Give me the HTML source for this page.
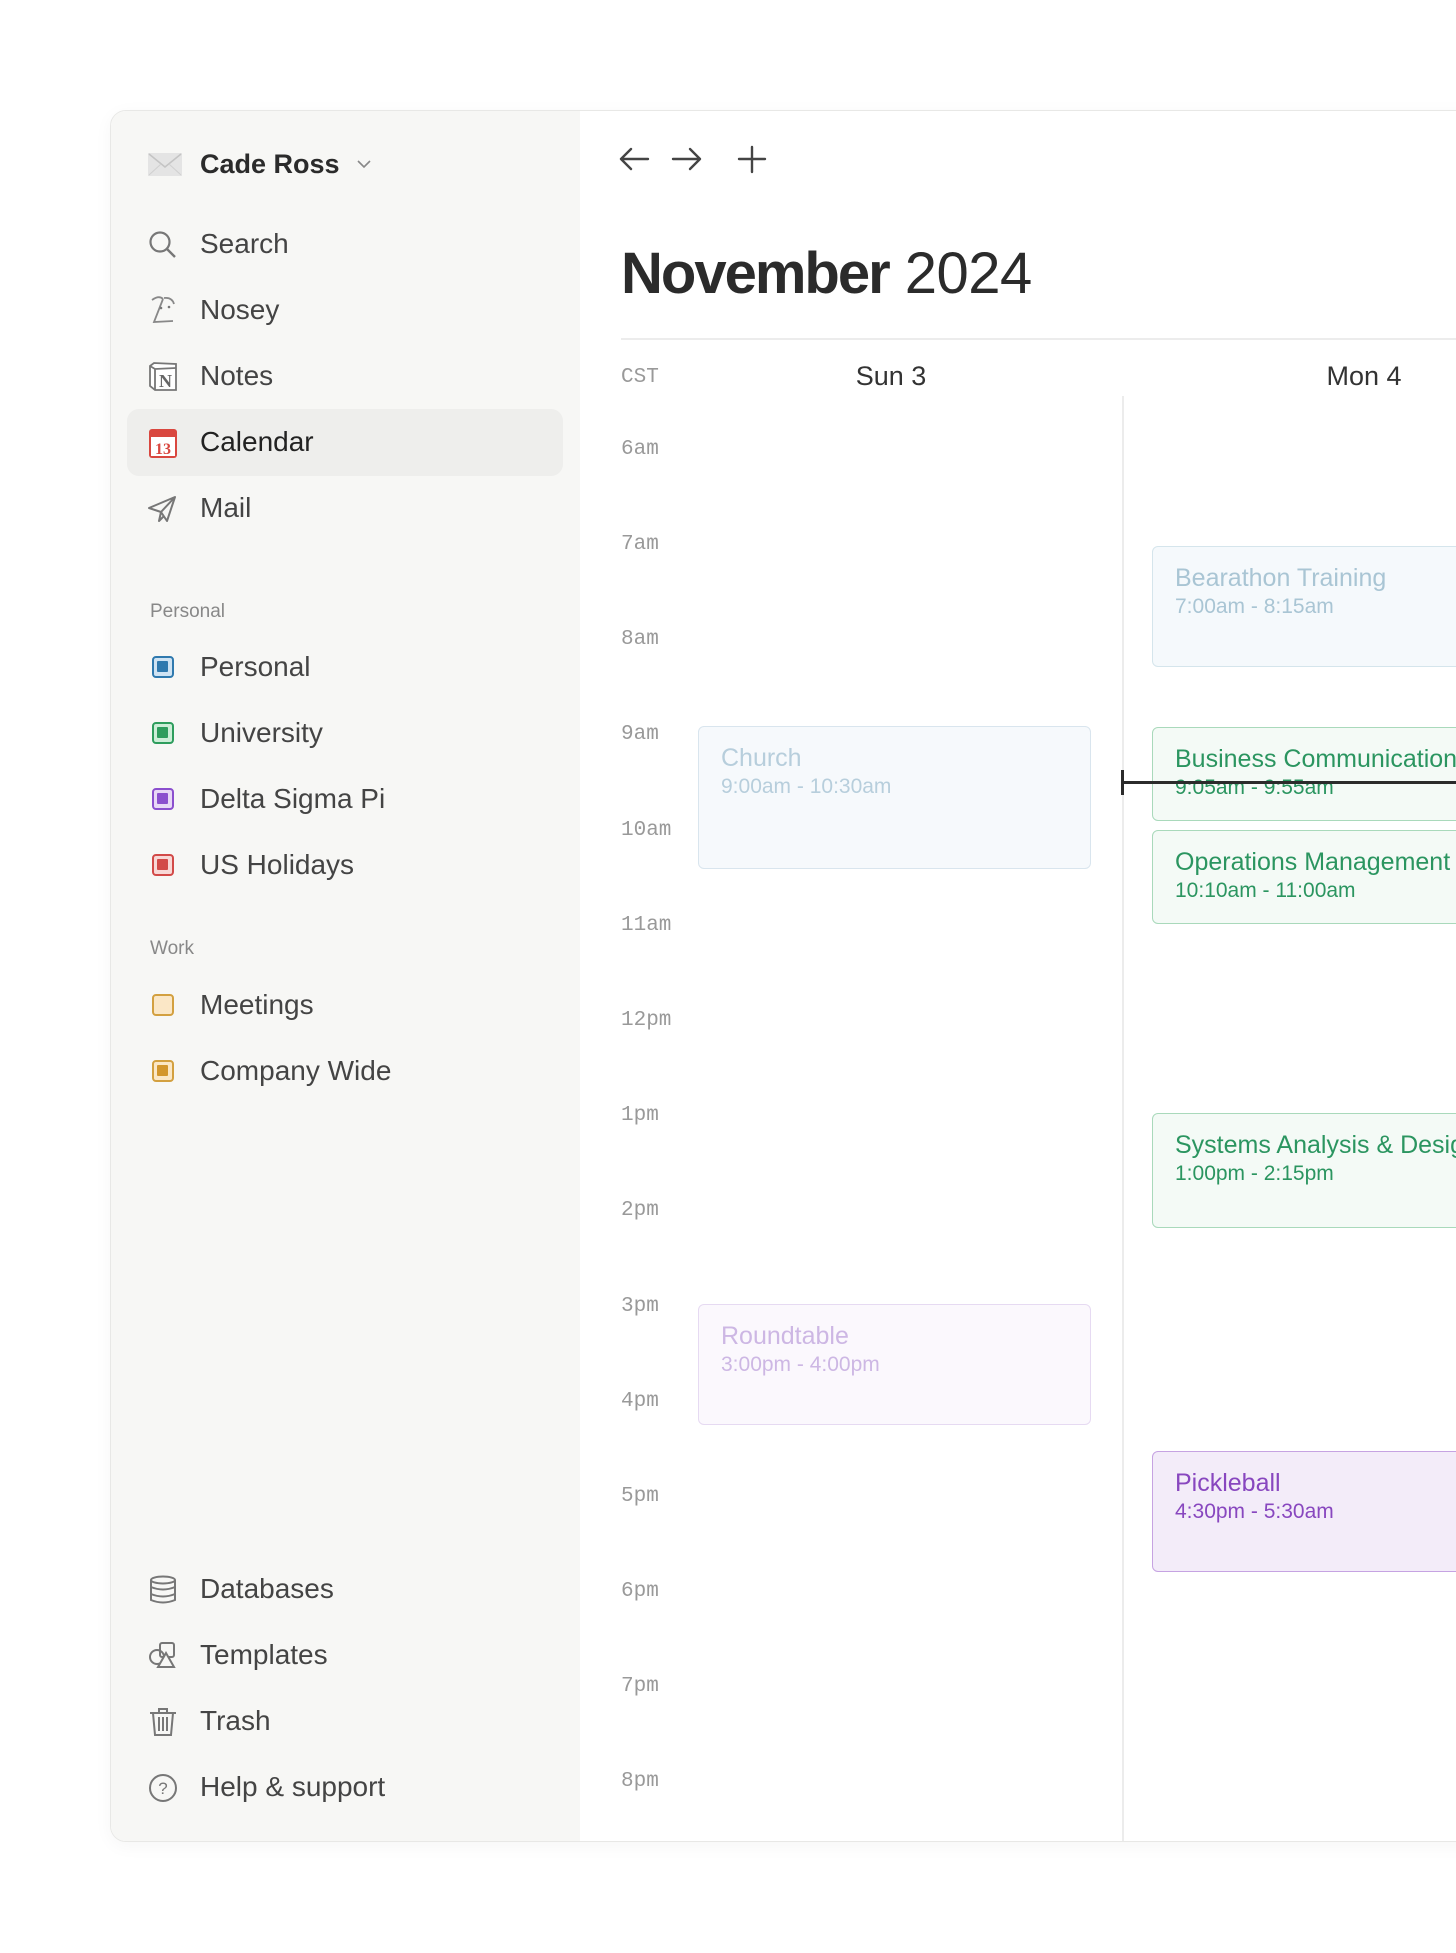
<!DOCTYPE html>
<html><head><meta charset="utf-8"><style>
*{margin:0;padding:0;box-sizing:border-box}
body{width:1456px;height:1953px;background:#fff;position:relative;overflow:hidden;font-family:"Liberation Sans",sans-serif}
.a{position:absolute}
#panel{left:110px;top:110px;width:1400px;height:1732px;border:1px solid #e8e8e6;border-radius:16px;background:#fff;box-shadow:0 4px 18px rgba(0,0,0,0.04);overflow:hidden}
#side{left:0;top:0;width:469px;height:100%;background:#f7f7f5}
.nav{position:absolute;left:89px;font-size:28px;color:#444;line-height:30px;transform:translateY(-15px);white-space:nowrap}
.ic{position:absolute;left:36px;transform:translateY(-15px)}
.sec{position:absolute;left:39px;font-size:19px;color:#888;transform:translateY(-11px)}
.sq{position:absolute;left:41px;width:22px;height:22px;border-radius:4px;border:2.5px solid;transform:translateY(-11px)}
.sq i{position:absolute;left:3px;top:3px;width:11px;height:11px;border-radius:1px}
.hr{position:absolute;left:510px;font-family:"Liberation Mono",monospace;font-size:21px;color:#999;transform:translateY(-10px)}
.ev{position:absolute;border:1.5px solid;border-radius:6px;padding:17px 0 0 22px;white-space:nowrap;overflow:hidden}
.ev b{display:block;font-weight:normal;font-size:25px;line-height:29px}
.ev s{display:block;text-decoration:none;font-size:21px;line-height:28px}
.g{background:#f4faf6;border-color:#a9d9bb;color:#2b9560}
.day{position:absolute;top:250px;width:140px;text-align:center;font-size:27px;color:#333;line-height:30px}
</style></head><body>
<div id="panel" class="a">
<div id="side" class="a">
<svg class="a" style="left:37px;top:42px" width="34" height="23" viewBox="0 0 34 23"><rect x="0" y="0" width="34" height="23" fill="#e4e4e4"/><path d="M1 1L17 14L33 1" fill="none" stroke="#c4c4c4" stroke-width="1.5"/><path d="M1 22L13 11M33 22L21 11" stroke="#d0d0d0" stroke-width="1"/></svg>
<div class="nav" style="top:53px;font-weight:bold;color:#2b2b2b;font-size:27px">Cade Ross</div>
<svg class="a" style="left:245px;top:47px" width="16" height="12" viewBox="0 0 16 12"><path d="M2 3L8 9L14 3" fill="none" stroke="#888" stroke-width="1.6"/></svg>

<svg class="ic" style="top:133px" width="32" height="32" viewBox="0 0 32 32"><circle cx="13" cy="13" r="9.5" fill="none" stroke="#777" stroke-width="2.2"/><path d="M20 20L28 28" stroke="#777" stroke-width="2.4"/></svg>
<div class="nav" style="top:133px">Search</div>
<svg class="ic" style="top:199px" width="32" height="32" viewBox="0 0 32 32"><path d="M5 5Q12 0 16 4M16 4L7 27L26 26" fill="none" stroke="#888" stroke-width="1.8"/><path d="M17 3Q25 2 27 9" fill="none" stroke="#888" stroke-width="1.8"/><circle cx="14" cy="13" r="1.3" fill="#777"/><circle cx="22" cy="12" r="1.3" fill="#777"/></svg>
<div class="nav" style="top:199px">Nosey</div>
<svg class="ic" style="top:265px" width="32" height="32" viewBox="0 0 32 32"><path d="M3 5L7 2L29 3L29 29L8 29L3 25Z" fill="#fff" stroke="#777" stroke-width="1.8"/><path d="M3 5L8 8L29 7M8 8L8 29" fill="none" stroke="#777" stroke-width="1.8"/><text x="18.5" y="26" font-family="Liberation Serif" font-weight="bold" font-size="18" fill="#666" text-anchor="middle">N</text></svg>
<div class="nav" style="top:265px">Notes</div>

<div class="a" style="left:16px;top:298px;width:436px;height:67px;background:#eeeeec;border-radius:12px"></div>
<svg class="ic" style="top:331px" width="32" height="32" viewBox="0 0 32 32"><rect x="2" y="2" width="28" height="29" rx="3" fill="#d9473f"/><rect x="4" y="10" width="24" height="19" fill="#fff"/><text x="16" y="27" font-family="Liberation Serif" font-weight="bold" font-size="16" fill="#d9473f" text-anchor="middle">13</text></svg>
<div class="nav" style="top:331px;color:#222">Calendar</div>
<svg class="ic" style="top:397px" width="32" height="32" viewBox="0 0 32 32"><path d="M2 15L28 4L20 28L14 19Z M14 19L28 4 M14 19L12 28L17 23" fill="none" stroke="#777" stroke-width="2" stroke-linejoin="round"/></svg>
<div class="nav" style="top:397px">Mail</div>

<div class="sec" style="top:501px">Personal</div>
<div class="sq" style="top:556px;border-color:#2f79ae;background:#cfe3f3"><i style="background:#2f79ae"></i></div>
<div class="nav" style="top:556px">Personal</div>
<div class="sq" style="top:622px;border-color:#2e9d5d;background:#cdeed8"><i style="background:#2e9d5d"></i></div>
<div class="nav" style="top:622px">University</div>
<div class="sq" style="top:688px;border-color:#8b4fce;background:#e8d8f6"><i style="background:#8b4fce"></i></div>
<div class="nav" style="top:688px">Delta Sigma Pi</div>
<div class="sq" style="top:754px;border-color:#d24a48;background:#f8d8d6"><i style="background:#d24a48"></i></div>
<div class="nav" style="top:754px">US Holidays</div>

<div class="sec" style="top:838px">Work</div>
<div class="sq" style="top:894px;border-color:#d3a040;background:#fbe7c6"></div>
<div class="nav" style="top:894px">Meetings</div>
<div class="sq" style="top:960px;border-color:#d3a040;background:#fbe7c6"><i style="background:#d3962c"></i></div>
<div class="nav" style="top:960px">Company Wide</div>

<svg class="ic" style="top:1478px" width="32" height="32" viewBox="0 0 32 32"><g fill="none" stroke="#777" stroke-width="2"><ellipse cx="16" cy="6" rx="12" ry="3.5"/><path d="M4 6V26Q16 31 28 26V6M4 13Q16 18 28 13M4 20Q16 25 28 20"/></g></svg>
<div class="nav" style="top:1478px">Databases</div>
<svg class="ic" style="top:1544px" width="32" height="32" viewBox="0 0 32 32"><g fill="none" stroke="#777" stroke-width="2"><rect x="13" y="3" width="14" height="14" rx="2"/><circle cx="10" cy="17" r="7"/><path d="M19 13L27 27H11Z" fill="#f7f7f5"/></g></svg>
<div class="nav" style="top:1544px">Templates</div>
<svg class="ic" style="top:1610px" width="32" height="32" viewBox="0 0 32 32"><g fill="none" stroke="#777" stroke-width="2"><path d="M3 7H29M12 7V3H20V7M6 7L8 29H24L26 7M12 11V25M16 11V25M20 11V25"/></g></svg>
<div class="nav" style="top:1610px">Trash</div>
<svg class="ic" style="top:1676px" width="32" height="32" viewBox="0 0 32 32"><circle cx="16" cy="16" r="13" fill="none" stroke="#777" stroke-width="2"/><text x="16" y="22" font-family="Liberation Sans" font-size="17" fill="#777" text-anchor="middle">?</text></svg>
<div class="nav" style="top:1676px">Help &amp; support</div>
</div>

<!-- main -->
<svg class="a" style="left:508px;top:33px" width="160" height="32" viewBox="0 0 160 32"><g fill="none" stroke="#444" stroke-width="2.4" stroke-linecap="round" stroke-linejoin="round"><path d="M29 15H2M12 5L2 15L12 25"/><path d="M54 15H81M71 5L81 15L71 25"/><path d="M133 3V28M120 15H146"/></g></svg>
<div class="a" style="left:510px;top:128px;font-size:58px;line-height:70px;color:#2b2b2b;white-space:nowrap"><span style="font-weight:bold;letter-spacing:-2px">November</span> <span style="font-weight:normal;letter-spacing:-0.5px">2024</span></div>
<div class="a" style="left:510px;top:227px;width:900px;height:2px;background:#ececec"></div>
<div class="hr" style="top:265px">CST</div>
<div class="day" style="left:710px">Sun 3</div>
<div class="day" style="left:1183px">Mon 4</div>
<div class="a" style="left:1011px;top:285px;width:1.5px;height:1460px;background:#ececec"></div>

<div class="hr" style="top:337px">6am</div>
<div class="hr" style="top:432px">7am</div>
<div class="hr" style="top:527px">8am</div>
<div class="hr" style="top:622px">9am</div>
<div class="hr" style="top:718px">10am</div>
<div class="hr" style="top:813px">11am</div>
<div class="hr" style="top:908px">12pm</div>
<div class="hr" style="top:1003px">1pm</div>
<div class="hr" style="top:1098px">2pm</div>
<div class="hr" style="top:1194px">3pm</div>
<div class="hr" style="top:1289px">4pm</div>
<div class="hr" style="top:1384px">5pm</div>
<div class="hr" style="top:1479px">6pm</div>
<div class="hr" style="top:1574px">7pm</div>
<div class="hr" style="top:1669px">8pm</div>

<div class="ev" style="left:587px;top:615px;width:393px;height:143px;background:#f6f9fc;border-color:#d9e5ee;color:#b7cedc"><b>Church</b><s>9:00am - 10:30am</s></div>
<div class="ev" style="left:587px;top:1193px;width:393px;height:121px;background:#fbf8fd;border-color:#e6daf2;color:#cdb7e4"><b>Roundtable</b><s>3:00pm - 4:00pm</s></div>

<div class="ev" style="left:1041px;top:435px;width:400px;height:121px;background:#f5f9fc;border-color:#d5e5ec;color:#a9c5d4"><b>Bearathon Training</b><s>7:00am - 8:15am</s></div>
<div class="ev g" style="left:1041px;top:616px;width:400px;height:94px"><b>Business Communication</b><s>9:05am - 9:55am</s></div>
<div class="ev g" style="left:1041px;top:719px;width:400px;height:94px"><b>Operations Management</b><s>10:10am - 11:00am</s></div>
<div class="ev g" style="left:1041px;top:1002px;width:400px;height:115px"><b>Systems Analysis &amp; Design</b><s>1:00pm - 2:15pm</s></div>
<div class="ev" style="left:1041px;top:1340px;width:400px;height:121px;background:#f3ecf9;border-color:#c6a3e2;color:#8847bf"><b>Pickleball</b><s>4:30pm - 5:30am</s></div>

<div class="a" style="left:1011px;top:670px;width:400px;height:2.5px;background:#2b2b2b"></div>
<div class="a" style="left:1010px;top:659px;width:3px;height:25px;background:#2b2b2b"></div>
</div>
</body></html>
